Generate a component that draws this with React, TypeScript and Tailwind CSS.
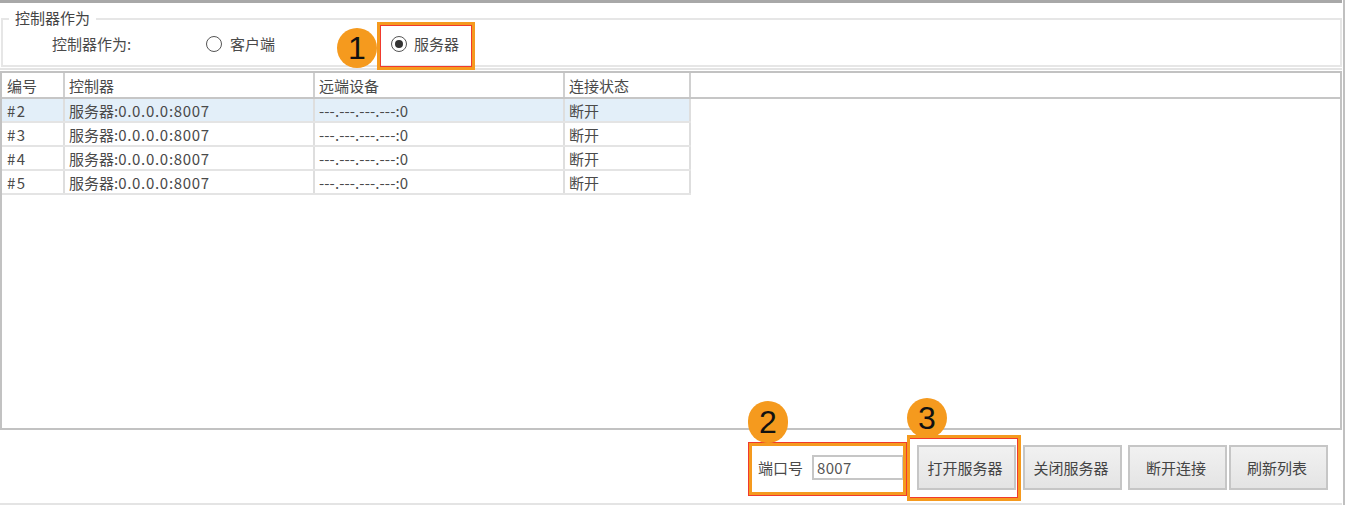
const rows = ["#2", "#3", "#4", "#5"];

function Badge({ n, className }: { n: string; className: string }) {
  return (
    <div className={`absolute flex items-center justify-center rounded-full bg-[#f59a1e] text-[32px] leading-none text-[#111] [font-family:'Liberation_Sans',sans-serif] ${className}`}>
      {n}
    </div>
  );
}

function Btn({ label, cls }: { label: string; cls: string }) {
  return (
    <div className={`flex h-[45px] items-center justify-center border-2 border-[#c6c6c6] bg-gradient-to-b from-[#f1f1f1] to-[#e4e4e4] pr-[3px] text-[15px] leading-none text-[#444] ${cls}`}>
      {label}
    </div>
  );
}

const cols = ["w-[63px] pl-[5px]", "w-[250px] pl-[4px]", "w-[250px] pl-[4px]", "w-[126px] pl-[4px]"];

export default function App() {
  return (
    <div className="relative flex h-[505px] w-[1345px] flex-col overflow-hidden border-r-2 border-[#c0c0c0] bg-white pr-[1px] text-[15px] text-[#4a4a4a] [font-family:'Noto_Sans_CJK_SC','Noto_Sans',sans-serif]">
      <div className="h-[3px] shrink-0 bg-[#a8a8a8]" />
      <div className="shrink-0 border-b-2 border-[#e4e4e4] pb-[1px] pl-[1px] pt-[15px]">
        <div className="relative flex h-[49px] items-center border-2 border-[#e6e6e6] pl-[49px] pt-[3px]">
          <span className="absolute -top-[12px] left-[6px] bg-white px-[6px] leading-[20px] text-[#444]">控制器作为</span>
          <span className="w-[154px] leading-[20px]">控制器作为:</span>
          <span className="h-[16px] w-[16px] rounded-full border-[1.5px] border-[#555] bg-white" />
          <span className="ml-[8px] w-[161px] leading-[20px]">客户端</span>
          <span className="flex h-[16px] w-[16px] items-center justify-center rounded-full border-[1.5px] border-[#555]">
            <span className="h-[8px] w-[8px] rounded-full bg-[#333]" />
          </span>
          <span className="ml-[7px] leading-[20px]">服务器</span>
        </div>
      </div>
      <div className="mt-[1px] flex h-[359px] shrink-0 flex-col border-2 border-[#c2c2c2]">
        <div className="flex h-[26px] shrink-0 border-b-2 border-[#c6c6c6] leading-[25px]">
          {["编号", "控制器", "远端设备", "连接状态"].map((h, i) => (
            <div key={h} className={`${cols[i]} border-r-2 border-[#d0d0d0]`}>{h}</div>
          ))}
        </div>
        {rows.map((r, idx) => (
          <div key={r} className={`flex h-[24px] w-[689px] shrink-0 border-b-2 border-[#e4e4e4] leading-[23px] ${idx === 0 ? "bg-[#e3eff9]" : "bg-white"}`}>
            <div className={`${cols[0]} border-r-2 border-[#dedede] tracking-[1.5px]`}>{r}</div>
            <div className={`${cols[1]} border-r-2 border-[#dedede]`}>服务器:<span className="tracking-[0.7px]">0.0.0.0:8007</span></div>
            <div className={`${cols[2]} border-r-2 border-[#dedede] tracking-[0.1px]`}>---.---.---.---:0</div>
            <div className={`${cols[3]} border-r-2 border-[#dedede]`}>断开</div>
          </div>
        ))}
      </div>
      <div className="flex flex-1 items-start justify-end border-b-2 border-[#e4e4e4] pr-[14px] pt-[15px]">
        <div className="flex h-[45px] items-center">
          <span className="mr-[9px] leading-[20px]">端口号</span>
          <span className="flex h-[25px] w-[92px] items-center border-2 border-[#c6c6c6] pl-[3px] leading-none tracking-[0.3px] text-[#555]">8007</span>
        </div>
        <Btn label="打开服务器" cls="ml-[13px] w-[99px]" />
        <Btn label="关闭服务器" cls="ml-[7px] w-[99px]" />
        <Btn label="断开连接" cls="ml-[6px] w-[99px]" />
        <Btn label="刷新列表" cls="ml-[2px] w-[99px]" />
      </div>

      <div className="absolute left-[377px] top-[22px] h-[48px] w-[98px] border-[3px] border-[#f59a1e]">
        <div className="h-full w-full border border-[#f03a2e]" />
      </div>
      <div className="absolute left-[748px] top-[442px] h-[54px] w-[159px] border border-[#f03a2e]">
        <div className="h-full w-full border-[3px] border-[#f59a1e]" />
      </div>
      <div className="absolute left-[907px] top-[435px] h-[66px] w-[114px] border-[3px] border-[#f59a1e]">
        <div className="h-full w-full border border-l-0 border-[#f03a2e]" />
      </div>
      <Badge n="1" className="left-[337px] top-[28px] h-[40px] w-[40px]" />
      <Badge n="2" className="left-[748px] top-[401px] h-[42px] w-[40px]" />
      <Badge n="3" className="left-[907px] top-[398px] h-[40px] w-[40px]" />
    </div>
  );
}
